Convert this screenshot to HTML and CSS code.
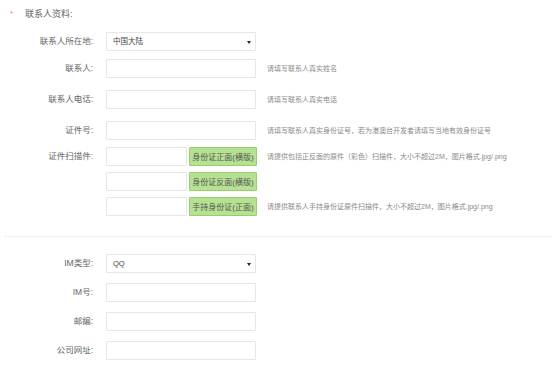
FILE: index.html
```html
<!DOCTYPE html>
<html lang="zh-CN">

<head>
  <meta charset="UTF-8">
  <meta name="viewport" content="width=device-width, initial-scale=1.0">
  <title>联系人资料</title>
  <link rel="stylesheet" href="styles.css">
</head>

<body>
  <div class="section-title"><span class="star">*</span>联系人资料:</div>

  <div class="form">
    <div class="form-row row-first">
      <label>联系人所在地:</label>
      <div class="select"><span>中国大陆</span></div>
    </div>

    <div class="form-row row-near">
      <label>联系人:</label>
      <input type="text" class="field">
      <span class="hint">请填写联系人真实姓名</span>
    </div>

    <div class="form-row">
      <label>联系人电话:</label>
      <input type="text" class="field">
      <span class="hint">请填写联系人真实电话</span>
    </div>

    <div class="form-row">
      <label>证件号:</label>
      <input type="text" class="field">
      <span class="hint">请填写联系人真实身份证号，若为港澳台开发者请填写当地有效身份证号</span>
    </div>

    <div class="form-row row-scan">
      <label>证件扫描件:</label>
      <div class="scan-list">
        <div class="scan-item">
          <input type="text" class="field field-short">
          <button type="button" class="upload-btn">身份证正面(横版)</button>
          <span class="hint">请提供包括正反面的原件（彩色）扫描件，大小不超过2M，图片格式.jpg/.png</span>
        </div>
        <div class="scan-item">
          <input type="text" class="field field-short">
          <button type="button" class="upload-btn">身份证反面(横版)</button>
        </div>
        <div class="scan-item">
          <input type="text" class="field field-short">
          <button type="button" class="upload-btn">手持身份证(正面)</button>
          <span class="hint">请提供联系人手持身份证原件扫描件，大小不超过2M，图片格式.jpg/.png</span>
        </div>
      </div>
    </div>
  </div>

  <hr class="divider">

  <div class="form">
    <div class="form-row row-im">
      <label>IM类型:</label>
      <div class="select"><span>QQ</span></div>
    </div>

    <div class="form-row row-low">
      <label>IM号:</label>
      <input type="text" class="field">
    </div>

    <div class="form-row row-low">
      <label>邮编:</label>
      <input type="text" class="field">
    </div>

    <div class="form-row row-low">
      <label>公司网址:</label>
      <input type="text" class="field">
    </div>
  </div>
</body>

</html>
```

FILE: styles.css
```css
body {
  margin: 0;
  background-color: #fff;
  color: #666;
  font-family: "Liberation Sans", "Noto Sans CJK SC", sans-serif;
}

.section-title {
  display: flex;
  align-items: center;
  height: 14px;
  padding: 6px 0 0 10px;
  font-size: 9px;
}

.star {
  width: 15px;
  color: #f07373;
  font-size: 8px;
}

.form-row {
  display: flex;
  align-items: flex-start;
  margin-top: 12px;
}

.row-first {
  margin-top: 12px;
}

.row-near {
  margin-top: 8px;
}

.row-scan {
  margin-top: 7px;
}

.row-im {
  margin-top: 17px;
}

.row-low {
  margin-top: 10px;
}

.form-row label {
  flex-shrink: 0;
  width: 93px;
  margin-right: 13px;
  text-align: right;
  font-size: 8.5px;
  line-height: 19px;
  color: #666;
}

.field {
  box-sizing: border-box;
  width: 150px;
  height: 19px;
  margin: 0;
  padding: 0 5px;
  border: 1px solid #e6e6e6;
  border-radius: 1px;
  background-color: #fff;
  outline: none;
}

.field-short {
  width: 81px;
  margin-right: 2px;
}

.select {
  position: relative;
  box-sizing: border-box;
  width: 150px;
  height: 19px;
  padding-left: 6px;
  border: 1px solid #e6e6e6;
  border-radius: 1px;
  font-size: 7.5px;
  line-height: 17px;
  color: #444;
}

/* little dropdown arrow */
.select::after {
  content: "";
  position: absolute;
  right: 4px;
  top: 8px;
  border-left: 2px solid transparent;
  border-right: 2px solid transparent;
  border-top: 3px solid #222;
}

.hint {
  margin-left: 11px;
  font-size: 7px;
  line-height: 19px;
  color: #8a8a8a;
  white-space: nowrap;
}

.scan-list {
  display: flex;
  flex-direction: column;
  gap: 6px;
}

.scan-item {
  display: flex;
  align-items: flex-start;
}

.upload-btn {
  box-sizing: border-box;
  width: 68px;
  height: 19px;
  margin: 0;
  padding: 0;
  border: 1px solid #98cd70;
  border-radius: 1px;
  background-color: #b7e192;
  color: #555;
  font-family: "Liberation Sans", "Noto Sans CJK SC", sans-serif;
  font-size: 8px;
  white-space: nowrap;
  cursor: pointer;
}

.scan-item .hint {
  margin-left: 10px;
}

.divider {
  height: 0;
  margin: 20px 2px 0 5px;
  border: none;
  border-top: 1px dotted #e6e6e6;
}
```
